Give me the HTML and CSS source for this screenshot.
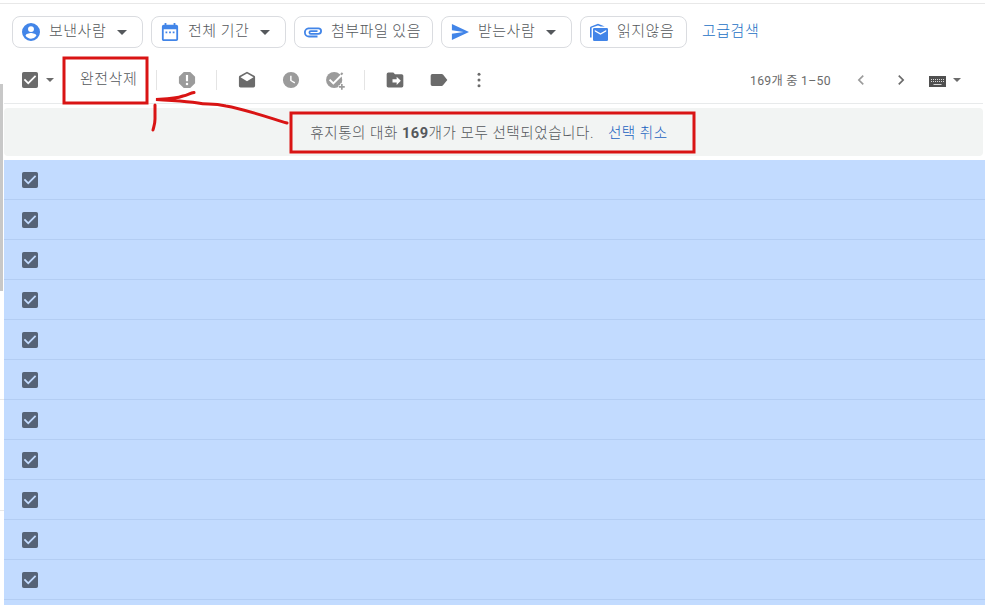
FILE: index.html
```
<!DOCTYPE html>
<html lang="ko">
<head>
  <meta charset="UTF-8">
  <title>휴지통</title>
  <link rel="stylesheet" href="styles.css">
</head>
<body>

<!-- shared icons -->
<svg class="defs">
  <symbol id="check" viewBox="3 3 18 18"><path d="M19 3H5a2 2 0 0 0-2 2v14a2 2 0 0 0 2 2h14a2 2 0 0 0 2-2V5a2 2 0 0 0-2-2zm-9 14l-5-5 1.4-1.4 3.6 3.6 7.6-7.6L19 8l-9 9z"/></symbol>
  <symbol id="caret" viewBox="0 0 10 5"><path d="M0 0h10L5 5z"/></symbol>
</svg>

<div class="sidebar">
  <div class="scrollbar"></div>
  <div class="side-line"></div>
  <div class="side-line second"></div>
</div>

<div class="main">
  <div class="filters">
    <div class="chip sender">
      <svg class="chip-icon" viewBox="2 2 20 20"><path d="M12 2a10 10 0 1 0 0 20 10 10 0 0 0 0-20zm0 3.5a3.3 3.3 0 1 1 0 6.600 3.300 3.300 0 0 1 0-6.600zm0 14c-2.500 0-4.700-1.300-6-3.200 0-2 4-3.100 6-3.100s6 1.100 6 3.100a7.200 7.200 0 0 1-6 3.200z"/></svg>
      <span>보낸사람</span>
      <svg class="caret"><use href="#caret"/></svg>
    </div>
    <div class="chip period">
      <svg class="chip-icon" viewBox="2 2 20 20"><path d="M19 4h-1V2h-2v2H8V2H6v2H5a2 2 0 0 0-2 2v14c0 1.100.9 2 2 2h14a2 2 0 0 0 2-2V6a2 2 0 0 0-2-2zm0 16H5V9h14v11zM7 11.500h2v2H7zm4 0h2v2h-2zm4 0h2v2h-2z"/></svg>
      <span>전체 기간</span>
      <svg class="caret"><use href="#caret"/></svg>
    </div>
    <div class="chip attach">
      <svg class="chip-icon" viewBox="2 2 20 20"><path d="M2 12.500C2 9.460 4.460 7 7.500 7H18a4 4 0 0 1 0 8H9.500a2.500 2.500 0 0 1 0-5H17v2H9.410c-.55 0-.55 1 0 1H18a2 2 0 0 0 0-4H7.500a3.500 3.500 0 0 0 0 7H17v2H7.500A5.500 5.500 0 0 1 2 12.500z"/></svg>
      <span>첨부파일 있음</span>
    </div>
    <div class="chip receiver">
      <svg class="chip-icon" viewBox="2 2 20 20"><path d="M3 21l19-9L3 3v7l13 2-13 2z"/></svg>
      <span>받는사람</span>
      <svg class="caret"><use href="#caret"/></svg>
    </div>
    <div class="chip unread">
      <svg class="chip-icon" viewBox="0 0 18 18"><path d="M4.200 5h12.600A1.200 1.200 0 0 1 18 6.200v10.600a1.200 1.200 0 0 1-1.200 1.200H4.200A1.200 1.200 0 0 1 3 16.800V6.200A1.200 1.200 0 0 1 4.200 5zm6.300 6.800L16.200 8.500V6.900l-5.700 3.300-5.700-3.300v1.600zM0 14.500V5c0-.8.3-1.300 1-1.600L8 .8l6.800 2.700h-4L8 2.400 2 4.600c-.3.2-.4.400-.4.800v9.100z"/></svg>
      <span>읽지않음</span>
    </div>
    <a class="advanced">고급검색</a>
  </div>

  <div class="toolbar">
    <svg class="checkbox"><use href="#check"/></svg>
    <svg class="caret small"><use href="#caret"/></svg>
    <span class="delete">완전삭제</span>
    <i class="divider"></i>
    <svg class="icon dim" viewBox="0 0 24 24"><path d="M15.900 2.300H8.100L2.300 8.100v7.800l5.800 5.800h7.800l5.800-5.800V8.100zM12 18.200a1.500 1.500 0 1 1 0-3 1.500 1.500 0 0 1 0 3zm1.300-4.800h-2.600V6h2.600z"/></svg>
    <i class="divider"></i>
    <svg class="icon" viewBox="0 0 24 24"><path d="M21.700 8.500c0-.8-.3-1.400-.9-1.700L12 2 3.200 6.800c-.6.3-.9.9-.9 1.700V19c0 1.100.9 2 2 2h15.400a2 2 0 0 0 2-2zM12 13.500L4.200 8.700 12 4.200l7.800 4.500z"/></svg>
    <svg class="icon dim clock" viewBox="0 0 24 24"><path d="M12 2.300a9.700 9.700 0 1 0 0 19.400 9.700 9.700 0 0 0 0-19.400zm4.200 13.900L11 13V7h1.700v5.200l4.300 2.600z"/></svg>
    <svg class="icon dim task" viewBox="0 0 24 24"><circle cx="11" cy="12" r="9.700"/><path class="cut" d="M5.500 11.500l4.500 4.500L21.500 4.500"/><path class="gap" d="M20.200 16.300v8M16.200 20.300h8"/><path d="M19.200 16.800h2v2.500h2.500v2h-2.500v2.500h-2v-2.500h-2.500v-2h2.500z"/><path d="M20.200 2.800l1.700 1.700-1.900 1.900-1.700-1.700z"/></svg>
    <i class="divider"></i>
    <svg class="icon" viewBox="0 0 24 24"><path d="M20 5h-8l-2-2H4a2 2 0 0 0-2 2v14c0 1.100.9 2 2 2h16a2 2 0 0 0 2-2V7a2 2 0 0 0-2-2zm-6 13v-3H9v-4h5V8l5 5z"/></svg>
    <svg class="icon label" viewBox="0 0 24 24"><path d="M16.800 5.500A2 2 0 0 0 15.200 4.800H4a2 2 0 0 0-2 2v10.400a2 2 0 0 0 2 2h11.200a2 2 0 0 0 1.600-.8L22 12z"/></svg>
    <svg class="icon more" viewBox="0 0 24 24"><circle cx="12" cy="5" r="1.800"/><circle cx="12" cy="12" r="1.800"/><circle cx="12" cy="19" r="1.800"/></svg>

    <span class="count">169개 중 1–50</span>
    <svg class="icon dim prev" viewBox="0 0 24 24"><path d="M15.400 7.400L14 6l-6 6 6 6 1.400-1.400-4.600-4.600z"/></svg>
    <svg class="icon next" viewBox="0 0 24 24"><path d="M10 6L8.600 7.400l4.600 4.600-4.600 4.600L10 18l6-6z"/></svg>
    <svg class="keyboard" viewBox="0 0 17 11"><path d="M0 0h17v11H0z"/><path class="keys" d="M2 3.500h13M2 5.500h13"/><path class="space" d="M4.500 8.500h8"/></svg>
    <svg class="caret small last"><use href="#caret"/></svg>
  </div>

  <div class="notice">
    <span>휴지통의 대화 <b>169</b>개가 모두 선택되었습니다.</span>
    <a>선택 취소</a>
  </div>

  <div class="list">
    <div class="row"><svg class="checkbox"><use href="#check"/></svg></div>
    <div class="row"><svg class="checkbox"><use href="#check"/></svg></div>
    <div class="row"><svg class="checkbox"><use href="#check"/></svg></div>
    <div class="row"><svg class="checkbox"><use href="#check"/></svg></div>
    <div class="row"><svg class="checkbox"><use href="#check"/></svg></div>
    <div class="row"><svg class="checkbox"><use href="#check"/></svg></div>
    <div class="row"><svg class="checkbox"><use href="#check"/></svg></div>
    <div class="row"><svg class="checkbox"><use href="#check"/></svg></div>
    <div class="row"><svg class="checkbox"><use href="#check"/></svg></div>
    <div class="row"><svg class="checkbox"><use href="#check"/></svg></div>
    <div class="row"><svg class="checkbox"><use href="#check"/></svg></div>
  </div>
</div>

<!-- red marker drawn over the page -->
<svg class="marker" viewBox="0 0 985 605">
  <rect x="64" y="58" width="83" height="45"/>
  <rect x="291" y="113" width="403" height="39"/>
  <path d="M287 123C270 118 244 109 226 106C211 103 207 105 198 103C184 101 176 101 156 99.500C166 99 175 99 183 96C188 95 190 93 194 92.500M155 105V119C155 124 154 126 153 130"/>
</svg>

</body>
</html>
```
FILE: styles.css
```
body {
  margin: 0;
  width: 985px;
  height: 605px;
  display: flex;
  overflow: hidden;
  background: #fff;
  color: #55585c;
  font-family: Roboto, "Noto Sans CJK KR", sans-serif;
  font-size: 15px;
}
svg {
  display: block;
  flex: none;
  fill: currentColor;
}
.defs {
  display: none;
}

/* left edge */
.sidebar {
  width: 4px;
  flex: none;
  padding-top: 84px;
  box-sizing: border-box;
}
.scrollbar {
  width: 3px;
  height: 207px;
  background: #c8c8c8;
}
.side-line {
  height: 1px;
  margin-top: 108px;
  background: #e8e8e8;
}
.side-line.second {
  margin-top: 110px;
}
.main {
  width: 981px;
  flex: none;
}

/* search chips */
.filters {
  display: flex;
  gap: 8px;
  height: 32px;
  margin-left: -4px;
  margin-top: 3px;
  padding: 12px 0 9px 12px;
  border-top: 1px solid #e8e8e8;
}
.chip {
  display: flex;
  align-items: center;
  box-sizing: border-box;
  height: 32px;
  padding-left: 9px;
  border: 1px solid #dadce0;
  border-radius: 8px;
}
.chip span,
.advanced,
.delete {
  font-weight: 300;
  letter-spacing: 0.5px;
  line-height: 20px;
  white-space: nowrap;
}
.chip span {
  padding-bottom: 2px;
}
.chip-icon {
  width: 18px;
  height: 18px;
  margin-right: 9px;
  color: #4285e8;
}
.caret {
  width: 10px;
  height: 5px;
  margin-left: auto;
  margin-right: 15px;
}
.sender {
  width: 131px;
}
.period {
  width: 135px;
}
.attach {
  width: 139px;
}
.receiver {
  width: 131px;
}
.unread {
  width: 107px;
}
.advanced {
  margin-left: 7px;
  padding-top: 5px;
  color: #1a6fc4;
}

/* toolbar */
.toolbar {
  display: flex;
  align-items: center;
  height: 46px;
  padding-left: 18px;
  margin-right: 2px;
  border-bottom: 1px solid #e8eaeb;
  color: #6b6b6b;
}
.checkbox {
  width: 16px;
  height: 16px;
}
.caret.small {
  width: 8px;
  height: 4px;
  margin: 0 0 0 8px;
}
.delete {
  width: 57px;
  margin-left: 26px;
  padding-bottom: 2px;
  color: #55585c;
}
.divider {
  width: 1px;
  height: 20px;
  margin: 0 20px 0 19px;
  background: #e4e4e4;
}
.icon {
  width: 20px;
  height: 20px;
}
.dim {
  color: #9b9b9b;
}
.clock,
.task,
.label {
  margin-left: 24px;
}
.more {
  margin-left: 20px;
}
.cut,
.gap {
  fill: none;
  stroke: #fff;
  stroke-width: 2.4;
}
.gap {
  stroke-width: 4;
}
.count {
  width: 82px;
  margin-left: auto;
  padding-bottom: 1px;
  font-size: 12.2px;
  letter-spacing: 0.3px;
  white-space: nowrap;
}
.prev {
  margin-left: 19px;
}
.next {
  margin-left: 20px;
}
.keyboard {
  width: 17px;
  height: 11px;
  margin: 3px 0 0 18px;
  color: #505050;
}
.keys,
.space {
  stroke: #d8d8d8;
  stroke-width: 1;
}
.keys {
  stroke-dasharray: 1 1;
}
.caret.small.last {
  margin: 0 22px 0 7px;
}

/* selection notice */
.notice {
  display: flex;
  align-items: center;
  justify-content: center;
  gap: 14px;
  box-sizing: border-box;
  height: 48px;
  margin: 4px 2px 4px 0;
  padding-right: 9px;
  padding-bottom: 1px;
  border-radius: 4px;
  background: #f2f4f3;
  font-size: 14.6px;
  font-weight: 300;
  letter-spacing: 0.5px;
  white-space: nowrap;
}
.notice b {
  font-weight: 700;
}
.notice a {
  color: #1a62c0;
}

/* mail rows, the bottom strip is the start of the next one */
.list {
  height: 445px;
  background: #c2dbff;
}
.row {
  display: flex;
  align-items: center;
  box-sizing: border-box;
  height: 40px;
  padding-left: 18px;
  padding-top: 1px;
  border-bottom: 1px solid #b3cdf3;
  color: #566377;
}

.marker {
  position: absolute;
  left: 0;
  top: 0;
  width: 985px;
  height: 605px;
  fill: none;
  stroke: #d91414;
  stroke-width: 3;
  stroke-linecap: round;
}
```
